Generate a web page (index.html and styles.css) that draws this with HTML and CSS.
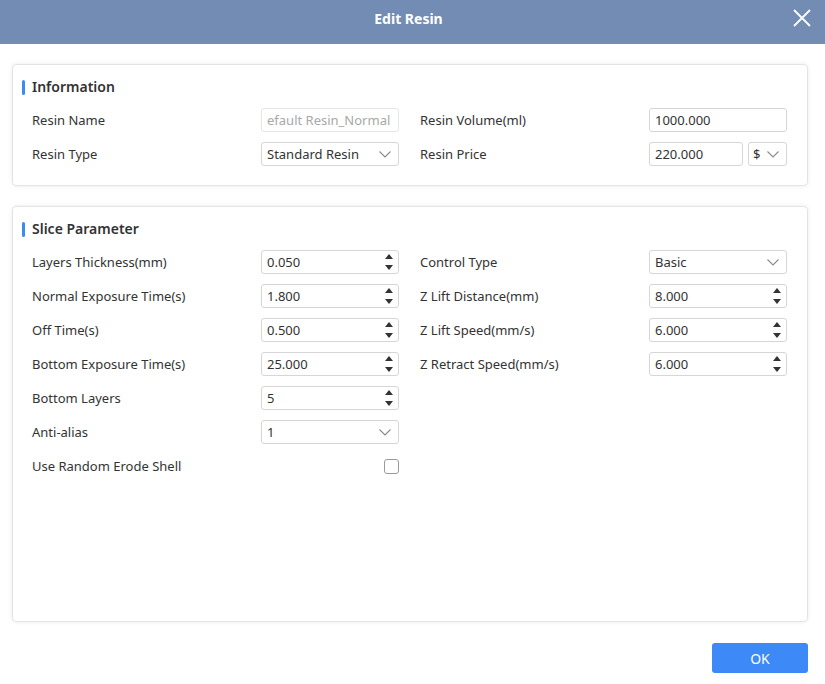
FILE: index.html
```html
<!DOCTYPE html>
<html>
<head>
<meta charset="utf-8">
<link rel="stylesheet" href="styles.css">
</head>
<body>
<div class="dialog">
  <div class="header">
    <span class="title">Edit Resin</span>
    <span class="close">
      <svg width="18" height="18" viewBox="0 0 18 18"><path d="M1 1L17 17M17 1L1 17" stroke="#fff" stroke-width="1.8" fill="none"/></svg>
    </span>
  </div>
  <div class="content">
    <section class="card card-info">
      <h2 class="heading">Information</h2>
      <div class="grid">
        <label class="lbl">Resin Name</label>
        <div class="field disabled"><span class="val">efault Resin_Normal</span></div>
        <label class="lbl lbl-r">Resin Volume(ml)</label>
        <div class="field"><span class="val">1000.000</span></div>

        <label class="lbl">Resin Type</label>
        <div class="field select"><span class="val">Standard Resin</span><span class="chev"><svg width="12" height="7" viewBox="0 0 12 7"><path d="M0.5 0.5L6 6L11.5 0.5" stroke="#8a8a8a" stroke-width="1.1" fill="none"/></svg></span></div>
        <label class="lbl lbl-r">Resin Price</label>
        <div class="price">
          <div class="field price-val"><span class="val">220.000</span></div>
          <div class="field select currency"><span class="val">$</span><span class="chev"><svg width="12" height="7" viewBox="0 0 12 7"><path d="M0.5 0.5L6 6L11.5 0.5" stroke="#8a8a8a" stroke-width="1.1" fill="none"/></svg></span></div>
        </div>
      </div>
    </section>

    <section class="card card-slice">
      <h2 class="heading">Slice Parameter</h2>
      <div class="grid">
        <label class="lbl">Layers Thickness(mm)</label>
        <div class="field spin"><span class="val">0.050</span><span class="arrows"><i class="up"></i><i class="down"></i></span></div>
        <label class="lbl lbl-r">Control Type</label>
        <div class="field select"><span class="val">Basic</span><span class="chev"><svg width="12" height="7" viewBox="0 0 12 7"><path d="M0.5 0.5L6 6L11.5 0.5" stroke="#8a8a8a" stroke-width="1.1" fill="none"/></svg></span></div>

        <label class="lbl">Normal Exposure Time(s)</label>
        <div class="field spin"><span class="val">1.800</span><span class="arrows"><i class="up"></i><i class="down"></i></span></div>
        <label class="lbl lbl-r">Z Lift Distance(mm)</label>
        <div class="field spin"><span class="val">8.000</span><span class="arrows"><i class="up"></i><i class="down"></i></span></div>

        <label class="lbl">Off Time(s)</label>
        <div class="field spin"><span class="val">0.500</span><span class="arrows"><i class="up"></i><i class="down"></i></span></div>
        <label class="lbl lbl-r">Z Lift Speed(mm/s)</label>
        <div class="field spin"><span class="val">6.000</span><span class="arrows"><i class="up"></i><i class="down"></i></span></div>

        <label class="lbl">Bottom Exposure Time(s)</label>
        <div class="field spin"><span class="val">25.000</span><span class="arrows"><i class="up"></i><i class="down"></i></span></div>
        <label class="lbl lbl-r">Z Retract Speed(mm/s)</label>
        <div class="field spin"><span class="val">6.000</span><span class="arrows"><i class="up"></i><i class="down"></i></span></div>

        <label class="lbl">Bottom Layers</label>
        <div class="field spin"><span class="val">5</span><span class="arrows"><i class="up"></i><i class="down"></i></span></div>
        <div class="empty"></div><div class="empty"></div>

        <label class="lbl">Anti-alias</label>
        <div class="field select"><span class="val">1</span><span class="chev"><svg width="12" height="7" viewBox="0 0 12 7"><path d="M0.5 0.5L6 6L11.5 0.5" stroke="#8a8a8a" stroke-width="1.1" fill="none"/></svg></span></div>
        <div class="empty"></div><div class="empty"></div>

        <label class="lbl">Use Random Erode Shell</label>
        <div class="check-cell"><span class="checkbox"></span></div>
        <div class="empty"></div><div class="empty"></div>
      </div>
    </section>

    <div class="footer">
      <button class="ok">OK</button>
    </div>
  </div>
</div>
</body>
</html>
```

FILE: styles.css
```css
* { box-sizing: border-box; }
html, body { margin: 0; padding: 0; }
body {
  width: 825px;
  height: 684px;
  background: #ffffff;
  font-family: "Noto Sans", "Open Sans", sans-serif;
  font-size: 13px;
  color: #333333;
  overflow: hidden;
}
.dialog { width: 825px; height: 684px; }
.header {
  position: relative;
  height: 44px;
  background: #738cb3;
  display: flex;
  align-items: center;
  justify-content: center;
}
.title {
  color: #ffffff;
  font-weight: 700;
  font-size: 14px;
  margin-top: -8px;
  margin-left: -8px;
}
.close {
  position: absolute;
  right: 14px;
  top: 9px;
  width: 18px;
  height: 18px;
  display: flex;
}
.content {
  padding: 20px 17px 0 12px;
  display: flex;
  flex-direction: column;
  gap: 20px;
}
.card {
  width: 796px;
  border: 1px solid #e4e4e4;
  border-radius: 4px;
  box-shadow: 0 0 4px rgba(0,0,0,0.08);
  padding: 12px 20px 0 19px;
}
.card-info { height: 122px; }
.card-slice { height: 416px; }
.heading {
  margin: 0 0 11px -10px;
  height: 20px;
  display: flex;
  align-items: center;
  gap: 7px;
  font-size: 14px;
  font-weight: 600;
  color: #333333;
  line-height: 20px;
}
.heading::before {
  content: "";
  width: 3px;
  height: 15px;
  border-radius: 2px;
  background: #3d8af7;
}
.grid {
  display: grid;
  grid-template-columns: 229px 138px 250px 138px;
  column-gap: 0;
  row-gap: 10px;
  grid-auto-rows: 24px;
}
.lbl {
  display: flex;
  align-items: center;
  color: #333333;
  white-space: nowrap;
}
.lbl-r { padding-left: 21px; }
.field {
  height: 24px;
  border: 1px solid #d6d6d6;
  border-radius: 3px;
  display: flex;
  align-items: center;
  padding: 0 5px;
  background: #fff;
  overflow: hidden;
}
.val {
  white-space: nowrap;
  overflow: hidden;
  flex: 1;
  color: #333333;
}
.disabled { border-color: #e6e6e6; }
.disabled .val { color: #a8a8a8; }
.chev {
  width: 12px;
  height: 7px;
  display: flex;
  margin-right: 2px;
}
.arrows {
  width: 9px;
  height: 16px;
  display: flex;
  flex-direction: column;
  justify-content: space-between;
  align-items: center;
}
.arrows i {
  width: 0;
  height: 0;
  border-left: 4px solid transparent;
  border-right: 4px solid transparent;
}
.arrows .up { border-bottom: 5px solid #333333; }
.arrows .down { border-top: 5px solid #333333; }
.price {
  display: flex;
  gap: 5px;
}
.price-val { width: 94px; }
.currency { width: 39px; padding-left: 4px; }
.check-cell {
  display: flex;
  align-items: center;
  justify-content: flex-end;
}
.checkbox {
  width: 15px;
  height: 15px;
  border: 1px solid #9a9a9a;
  border-radius: 3px;
  background: #fff;
}
.footer {
  display: flex;
  justify-content: flex-end;
  margin-top: 1px;
}
.ok {
  width: 96px;
  height: 30px;
  border: none;
  border-radius: 3px;
  background: #3d89f8;
  color: #ffffff;
  font-family: "Noto Sans", "Open Sans", sans-serif;
  font-size: 14px;
}
```
